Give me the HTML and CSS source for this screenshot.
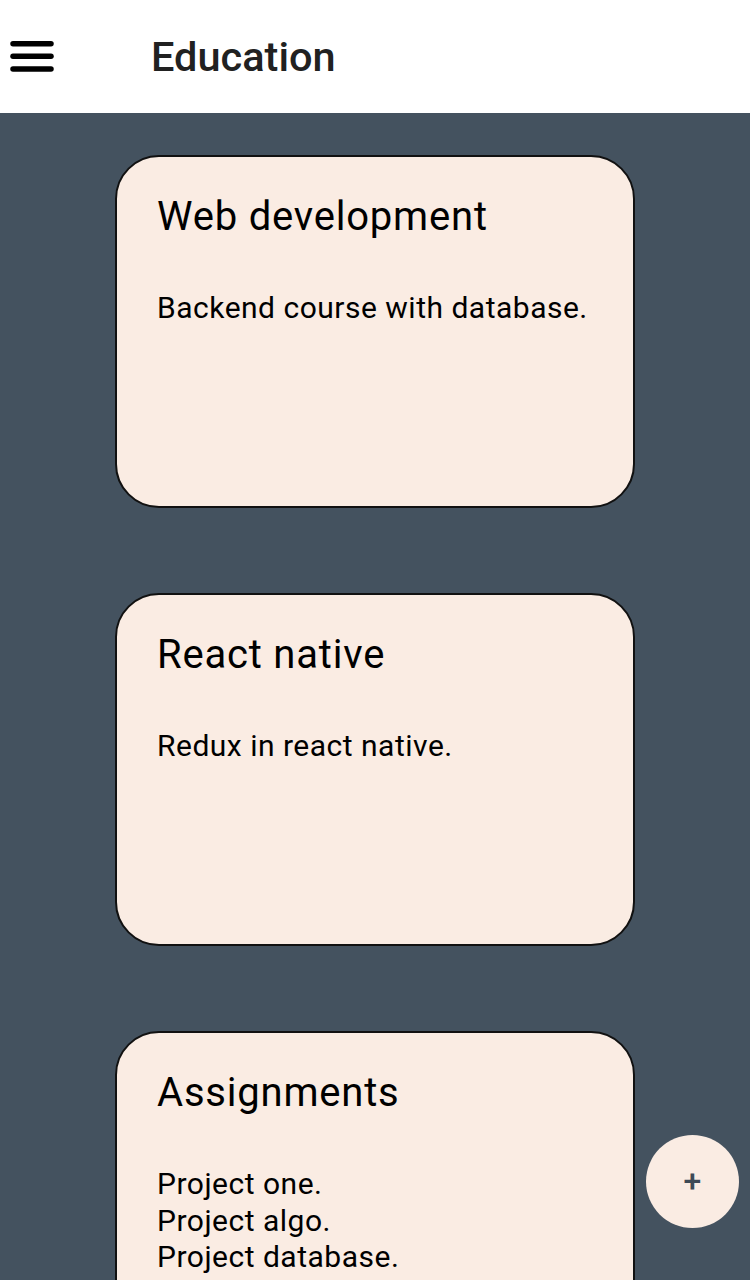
FILE: index.html
```html
<!DOCTYPE html>
<html>
<head>
<meta charset="utf-8">
<link rel="stylesheet" href="styles.css">
</head>
<body>
<header class="appbar">
  <button class="menu-btn" aria-label="menu">
    <svg width="44" height="31" viewBox="0 0 44 31"><g stroke="#000" stroke-width="5.5" stroke-linecap="round"><line x1="3" y1="2.75" x2="41" y2="2.75"/><line x1="3" y1="15.25" x2="41" y2="15.25"/><line x1="3" y1="28" x2="41" y2="28"/></g></svg>
  </button>
  <h1 class="appbar-title">Education</h1>
</header>
<main class="list">
  <section class="card">
    <h2 class="card-title">Web development</h2>
    <p class="card-body">Backend course with database.</p>
  </section>
  <section class="card">
    <h2 class="card-title">React native</h2>
    <p class="card-body">Redux in react native.</p>
  </section>
  <section class="card">
    <h2 class="card-title">Assignments</h2>
    <p class="card-body">Project one.<br>Project algo.<br>Project database.</p>
  </section>
</main>
<button class="fab" aria-label="add">+</button>
</body>
</html>
```
FILE: styles.css
```css
html, body {
  margin: 0;
  padding: 0;
}
body {
  background: #44525f;
  font-family: Roboto, "Liberation Sans", sans-serif;
  width: 750px;
  height: 1280px;
  overflow: hidden;
}
.appbar {
  height: 113px;
  background: #ffffff;
  display: flex;
  align-items: flex-start;
  box-sizing: border-box;
  padding: 32px 0 0 10px;
}
.menu-btn {
  border: 0;
  background: none;
  padding: 0;
  width: 44px;
  height: 31px;
  display: flex;
  margin-top: 9px;
}
.appbar-title {
  margin: 0 0 0 97px;
  font-size: 41.5px;
  line-height: 50px;
  font-weight: 500;
  color: #212121;
}
.list {
  display: flex;
  flex-direction: column;
  align-items: center;
  gap: 85px;
  padding-top: 42px;
}
.card {
  width: 520px;
  height: 353px;
  box-sizing: border-box;
  background: #faece3;
  border: 2px solid #111;
  border-radius: 44px;
  padding: 36px 40px;
  flex-shrink: 0;
}
.card-title {
  margin: 0;
  font-size: 40px;
  font-weight: 400;
  letter-spacing: 0.8px;
  color: #000;
  line-height: 48px;
}
.card-body {
  margin: 49px 0 0;
  font-size: 30px;
  letter-spacing: 0.5px;
  line-height: 36.5px;
  color: #000;
}
.fab {
  position: fixed;
  right: 11px;
  bottom: 52px;
  width: 93px;
  height: 93px;
  border-radius: 50%;
  border: 0;
  background: #faece3;
  color: #3e4a56;
  font-family: Roboto, sans-serif;
  font-size: 32px;
  font-weight: 500;
  display: flex;
  align-items: center;
  justify-content: center;
  padding: 0 0 2px;
}
```
